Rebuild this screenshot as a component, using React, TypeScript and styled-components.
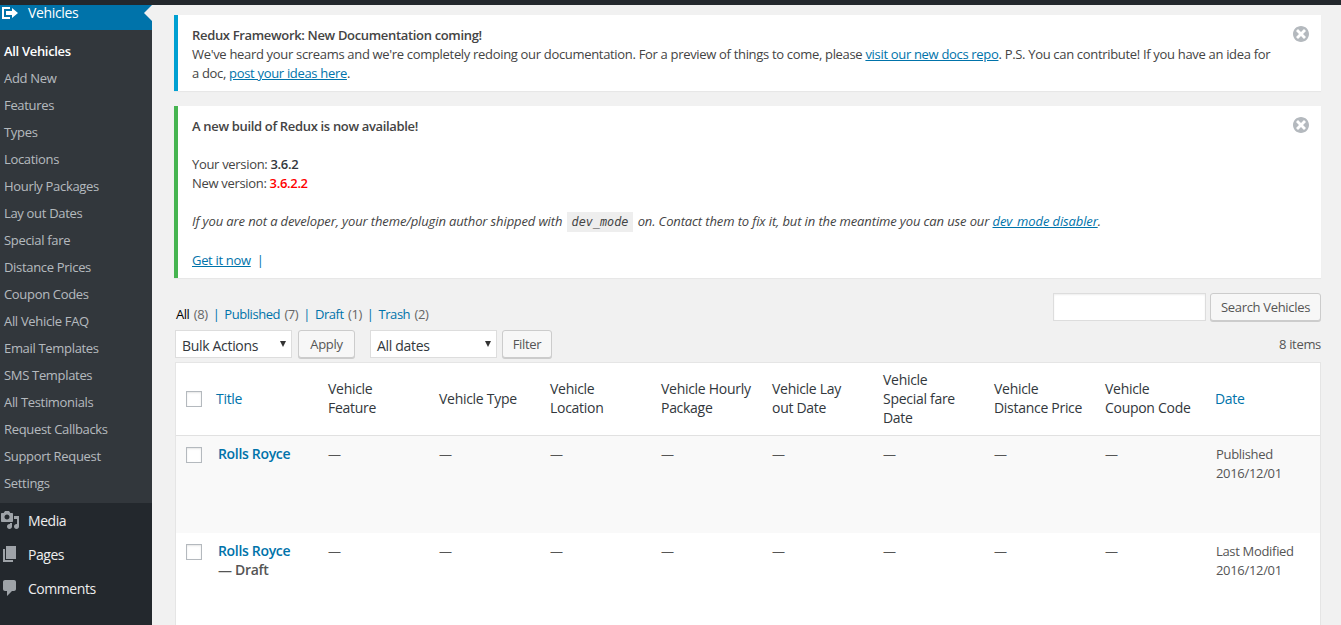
import React from 'react';
import styled, { createGlobalStyle } from 'styled-components';

const GlobalStyle = createGlobalStyle`
  html, body {
    margin: 0;
    height: 625px;
    overflow: hidden;
    background: #f1f1f1;
  }
  body {
    font-family: "Open Sans", "Liberation Sans", sans-serif;
    font-size: 13px;
    line-height: 19px;
    letter-spacing: -0.32px;
    color: #444;
  }
`;

const Page = styled.div`
  display: flex;
  flex-direction: column;
  height: 625px;
`;

const TopBar = styled.div`
  height: 5px;
  flex: none;
  background: #23282d;
`;

const Body = styled.div`
  display: flex;
  flex: 1;
  min-height: 0;
`;

const Sidebar = styled.nav`
  width: 152px;
  flex: none;
  background: #23282d;
`;

const CurrentItem = styled.div`
  position: relative;
  height: 25px;
  background: #0073aa;
  color: #fff;
  display: flex;
  align-items: flex-start;
  font-size: 14px;
  line-height: 16px;
  letter-spacing: -0.35px;

  &::after {
    content: '';
    position: absolute;
    right: 0;
    top: 0;
    border: 8px solid transparent;
    border-left-width: 0;
    border-right-color: #f1f1f1;
  }
`;

const SubMenu = styled.ul`
  list-style: none;
  margin: 0;
  padding: 8px 0 6px;
  background: #32373c;
`;

const SubItem = styled.li<{ $current?: boolean }>`
  height: 27px;
  line-height: 27px;
  padding-left: 4px;
  color: ${(p) => (p.$current ? '#fff' : 'rgba(240, 245, 250, 0.7)')};
  font-weight: ${(p) => (p.$current ? 600 : 400)};
`;

const MenuItem = styled.div`
  height: 34px;
  display: flex;
  align-items: center;
  font-size: 14px;
  letter-spacing: -0.45px;
  color: #eee;

  &:first-of-type {
    margin-top: 1px;
  }
`;

const MenuIcon = styled.svg`
  width: 20px;
  height: 20px;
  flex: none;
  margin-right: 8px;
  fill: rgba(240, 245, 250, 0.6);
`;

const CurrentIcon = styled(MenuIcon)`
  fill: #fff;
  margin-top: -2px;
`;

const Main = styled.main`
  flex: 1;
  min-width: 0;
  padding: 10px 20px 0 22px;
`;

const Notice = styled.div<{ $accent: string }>`
  position: relative;
  background: #fff;
  border-left: 4px solid ${(p) => p.$accent};
  box-shadow: 0 1px 1px rgba(0, 0, 0, 0.04);
  padding: 11px 46px 8px 14px;
  margin-bottom: 15px;
`;

const NoticeTitle = styled.div<{ $gap?: boolean }>`
  font-weight: 550;
  letter-spacing: -0.33px;
  margin-bottom: ${(p) => (p.$gap ? '19px' : '0')};
`;

const NoticeBlock = styled.div`
  margin-bottom: 19px;

  &:last-child {
    margin-bottom: 0;
  }
`;

const HintBlock = styled(NoticeBlock)`
  font-style: italic;
  letter-spacing: -0.12px;
`;

const TextLink = styled.a`
  color: #0073aa;
  text-decoration: underline;
`;

const Strong = styled.strong<{ $red?: boolean }>`
  font-weight: 550;
  color: ${(p) => (p.$red ? '#f00' : '#32373c')};
`;

const Code = styled.code`
  font-family: "DejaVu Sans Mono", "Liberation Mono", monospace;
  font-style: italic;
  font-size: 11.8px;
  letter-spacing: 0;
  background: #eee;
  padding: 3px 5px;
  margin: 0 1px;
`;

const Separator = styled.span`
  color: #0073aa;
  margin-left: 6px;
`;

const DismissIcon = styled.svg`
  position: absolute;
  top: 11px;
  right: 12px;
  width: 16px;
  height: 16px;
  fill: #b4b9be;
`;

const SearchRow = styled.div`
  display: flex;
  justify-content: space-between;
  align-items: flex-start;
  height: 37px;
`;

const StatusLinks = styled.ul`
  list-style: none;
  display: flex;
  margin: 12px 0 0 2px;
  padding: 0;
  color: #666;
  letter-spacing: -0.45px;
  word-spacing: 1.5px;
`;

const StatusItem = styled.li`
  &:not(:last-child)::after {
    content: '|';
    color: #0073aa;
    margin: 0 5px;
  }
`;

const StatusLink = styled.a<{ $current?: boolean }>`
  color: ${(p) => (p.$current ? '#000' : '#0073aa')};
`;

const SearchBox = styled.div`
  display: flex;
  gap: 4px;
`;

const SearchInput = styled.input`
  box-sizing: border-box;
  width: 153px;
  height: 28px;
  border: 1px solid #ddd;
  background: #fff;
  box-shadow: inset 0 1px 2px rgba(0, 0, 0, 0.07);
  padding: 0 8px;
  margin: 0;
`;

const Button = styled.button<{ $width: number }>`
  box-sizing: border-box;
  width: ${(p) => p.$width}px;
  height: 28px;
  padding: 0;
  margin: 0;
  font: inherit;
  letter-spacing: inherit;
  color: #555;
  background: #f7f7f7;
  border: 1px solid #ccc;
  border-radius: 3px;
  box-shadow: 0 1px 0 #ccc;
`;

const TableNav = styled.div`
  display: flex;
  align-items: flex-start;
  height: 32px;
  margin-left: 1px;
`;

const Select = styled.div<{ $width: number }>`
  box-sizing: border-box;
  position: relative;
  width: ${(p) => p.$width}px;
  height: 28px;
  padding-left: 6px;
  font-size: 14px;
  line-height: 29px;
  color: #32373c;
  background: #fff;
  border: 1px solid #ddd;

  &::after {
    content: '';
    position: absolute;
    right: 5px;
    top: 10px;
    border: 3.5px solid transparent;
    border-top: 6px solid #333;
    border-bottom-width: 0;
  }
`;

const BulkSelect = styled(Select)`
  margin-right: 6px;
`;

const DateSelect = styled(Select)`
  margin: 0 5px 0 15px;
`;

const ItemCount = styled.div`
  margin: 5px 0 0 auto;
  color: #555;
`;

const Table = styled.table`
  table-layout: fixed;
  width: 1146px;
  margin-left: 1px;
  border-collapse: separate;
  border-spacing: 0;
  background: #fff;
  border: 1px solid #e5e5e5;
  border-bottom: none;
  box-sizing: border-box;
`;

const HeadRow = styled.tr`
  height: 73px;
`;

const Th = styled.th<{ $link?: boolean }>`
  box-sizing: border-box;
  padding: 0 10px 2px;
  font-size: 14px;
  font-weight: 400;
  letter-spacing: -0.29px;
  text-align: left;
  line-height: 19px;
  color: ${(p) => (p.$link ? '#0073aa' : '#32373c')};
  border-bottom: 1px solid #e1e1e1;
`;

const TitleTh = styled(Th)`
  padding-left: 8px;
`;

const DateTh = styled(Th)`
  padding-left: 9px;
`;

const Row = styled.tr<{ $alt?: boolean; $height: number }>`
  height: ${(p) => p.$height}px;
  background: ${(p) => (p.$alt ? '#f9f9f9' : '#fff')};
`;

const Td = styled.td`
  box-sizing: border-box;
  padding: 9px 10px;
  vertical-align: top;
  color: #555;
`;

const TitleTd = styled(Td)`
  font-size: 14px;
  font-weight: 550;
  padding: 8px 10px;
`;

const RowTitle = styled.a`
  color: #0073aa;
`;

const CheckCell = styled.td`
  box-sizing: border-box;
  padding: 11px 0 0 10px;
  vertical-align: top;
`;

const CheckHead = styled.th`
  box-sizing: border-box;
  padding: 0 0 0 10px;
  border-bottom: 1px solid #e1e1e1;
`;

const Checkbox = styled.span`
  display: block;
  box-sizing: border-box;
  width: 16px;
  height: 16px;
  background: #fff;
  border: 1px solid #b4b9be;
  box-shadow: inset 0 1px 2px rgba(0, 0, 0, 0.1);
`;

const columns = [
  'Vehicle Feature',
  'Vehicle Type',
  'Vehicle Location',
  'Vehicle Hourly Package',
  'Vehicle Lay out Date',
  'Vehicle Special fare Date',
  'Vehicle Distance Price',
  'Vehicle Coupon Code',
];

const subItems = [
  'All Vehicles',
  'Add New',
  'Features',
  'Types',
  'Locations',
  'Hourly Packages',
  'Lay out Dates',
  'Special fare',
  'Distance Prices',
  'Coupon Codes',
  'All Vehicle FAQ',
  'Email Templates',
  'SMS Templates',
  'All Testimonials',
  'Request Callbacks',
  'Support Request',
  'Settings',
];

const menuIcons: Record<string, string> = {
  Media:
    'M13 11V4c0-.55-.45-1-1-1h-1.67L9 1H5L3.67 3H2c-.55 0-1 .45-1 1v7c0 .55.45 1 1 1h10c.55 0 1-.45 1-1zM7 4.5c1.38 0 2.5 1.12 2.5 2.5S8.38 9.5 7 9.5 4.5 8.38 4.5 7 5.62 4.5 7 4.5zM14 6h5v10.5c0 1.38-1.12 2.5-2.5 2.5S14 17.88 14 16.5s1.12-2.5 2.5-2.5c.17 0 .34.02.5.05V9h-3V6zm-4 8.05V13h2v3.5c0 1.38-1.12 2.5-2.5 2.5S7 17.88 7 16.5 8.12 14 9.5 14c.17 0 .34.02.5.05z',
  Pages: 'M6 15V2h10v13H6zm-1 1h8v2H3V5h2v11z',
  Comments:
    'M5 2h9c1.1 0 2 .9 2 2v7c0 1.1-.9 2-2 2h-2l-5 5v-5H5c-1.1 0-2-.9-2-2V4c0-1.1.9-2 2-2z',
};

const Dismiss = () => (
  <DismissIcon viewBox="2 2 16 16">
    <path d="M10 2c4.42 0 8 3.58 8 8s-3.58 8-8 8-8-3.58-8-8 3.58-8 8-8zm5 11l-3-3 3-3-2-2-3 3-3-3-2 2 3 3-3 3 2 2 3-3 3 3z" />
  </DismissIcon>
);

const App: React.FC = () => {
  return (
    <Page>
      <GlobalStyle />
      <TopBar />
      <Body>
        <Sidebar>
          <CurrentItem>
            <CurrentIcon viewBox="0 0 20 20">
              <path d="M4 6h6V4H2v12.01h8V14H4V6zm2 2h6V5l6 5-6 5v-3H6V8z" />
            </CurrentIcon>
            Vehicles
          </CurrentItem>
          <SubMenu>
            {subItems.map((item, i) => (
              <SubItem key={item} $current={i === 0}>
                {item}
              </SubItem>
            ))}
          </SubMenu>
          {Object.keys(menuIcons).map((name) => (
            <MenuItem key={name}>
              <MenuIcon viewBox="0 0 20 20">
                <path d={menuIcons[name]} />
              </MenuIcon>
              {name}
            </MenuItem>
          ))}
        </Sidebar>
        <Main>
          <Notice $accent="#00a0d2">
            <Dismiss />
            <NoticeTitle>Redux Framework: New Documentation coming!</NoticeTitle>
            We've heard your screams and we're completely redoing our
            documentation. For a preview of things to come, please{' '}
            <TextLink>visit our new docs repo</TextLink>. P.S. You can
            contribute! If you have an idea for a doc,{' '}
            <TextLink>post your ideas here</TextLink>.
          </Notice>
          <Notice $accent="#46b450">
            <Dismiss />
            <NoticeTitle $gap>A new build of Redux is now available!</NoticeTitle>
            <NoticeBlock>
              Your version: <Strong>3.6.2</Strong>
              <br />
              New version: <Strong $red>3.6.2.2</Strong>
            </NoticeBlock>
            <HintBlock>
              If you are not a developer, your theme/plugin author shipped with{' '}
              <Code>dev_mode</Code> on. Contact them to fix it, but in the
              meantime you can use our <TextLink>dev_mode disabler</TextLink>.
            </HintBlock>
            <NoticeBlock>
              <TextLink>Get it now</TextLink>
              <Separator>|</Separator>
            </NoticeBlock>
          </Notice>
          <SearchRow>
            <StatusLinks>
              <StatusItem>
                <StatusLink $current>All</StatusLink> (8)
              </StatusItem>
              <StatusItem>
                <StatusLink>Published</StatusLink> (7)
              </StatusItem>
              <StatusItem>
                <StatusLink>Draft</StatusLink> (1)
              </StatusItem>
              <StatusItem>
                <StatusLink>Trash</StatusLink> (2)
              </StatusItem>
            </StatusLinks>
            <SearchBox>
              <SearchInput />
              <Button $width={111}>Search Vehicles</Button>
            </SearchBox>
          </SearchRow>
          <TableNav>
            <BulkSelect $width={117}>Bulk Actions</BulkSelect>
            <Button $width={57}>Apply</Button>
            <DateSelect $width={127}>All dates</DateSelect>
            <Button $width={50}>Filter</Button>
            <ItemCount>8 items</ItemCount>
          </TableNav>
          <Table>
            <colgroup>
              <col width={32} />
              <col width={110} />
              {columns.map((c) => (
                <col key={c} width={111} />
              ))}
              <col />
            </colgroup>
            <thead>
              <HeadRow>
                <CheckHead>
                  <Checkbox />
                </CheckHead>
                <TitleTh $link>Title</TitleTh>
                {columns.map((c) => (
                  <Th key={c}>{c}</Th>
                ))}
                <DateTh $link>Date</DateTh>
              </HeadRow>
            </thead>
            <tbody>
              <Row $alt $height={97}>
                <CheckCell>
                  <Checkbox />
                </CheckCell>
                <TitleTd>
                  <RowTitle>Rolls Royce</RowTitle>
                </TitleTd>
                {columns.map((c) => (
                  <Td key={c}>—</Td>
                ))}
                <Td>
                  Published
                  <br />
                  2016/12/01
                </Td>
              </Row>
              <Row $height={100}>
                <CheckCell>
                  <Checkbox />
                </CheckCell>
                <TitleTd>
                  <RowTitle>Rolls Royce</RowTitle>
                  <br />— Draft
                </TitleTd>
                {columns.map((c) => (
                  <Td key={c}>—</Td>
                ))}
                <Td>
                  Last Modified
                  <br />
                  2016/12/01
                </Td>
              </Row>
            </tbody>
          </Table>
        </Main>
      </Body>
    </Page>
  );
};

export default App;
